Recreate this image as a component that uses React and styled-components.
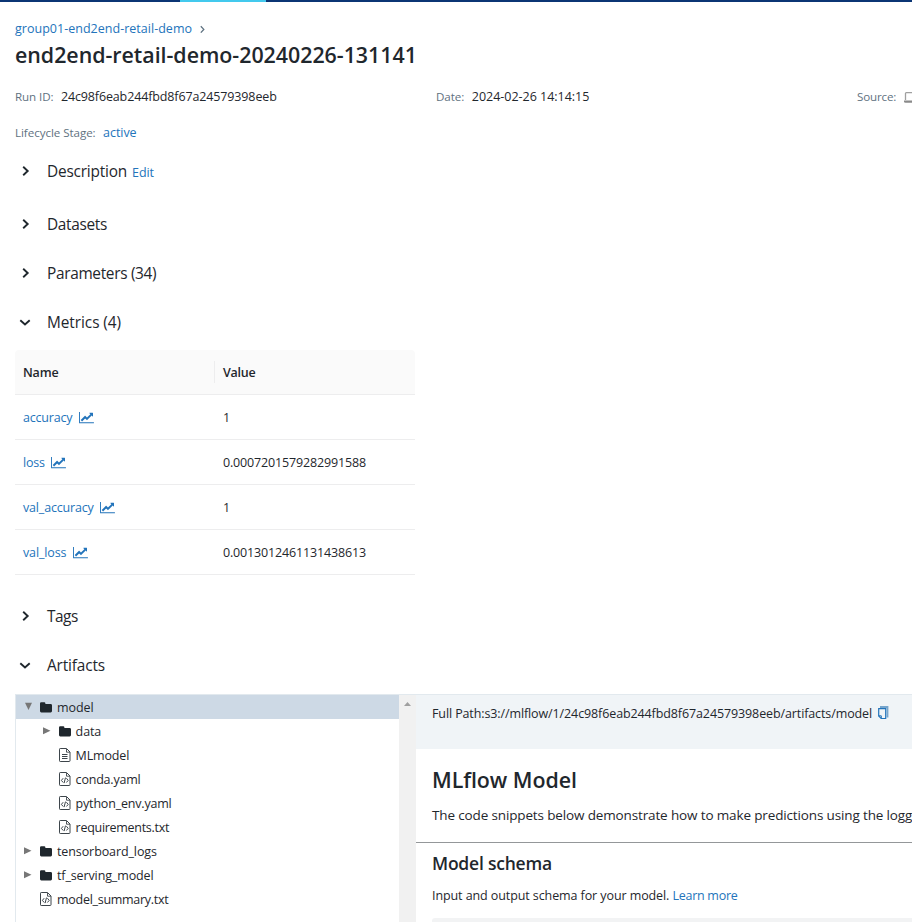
import React from "react";
import styled, { createGlobalStyle } from "styled-components";

const ink = "#1f272d";
const link = "#2374bb";
const muted = "#5f7281";

const GlobalStyle = createGlobalStyle`
  * { box-sizing: border-box; }
  html, body { margin: 0; padding: 0; overflow: hidden; }
  body {
    background: #fff;
    color: ${ink};
    font-family: "Open Sans", "Noto Sans", sans-serif;
    font-size: 12.5px;
    line-height: 20px;
  }
`;

const Page = styled.div`
  width: 100%;
  height: 922px;
  overflow: hidden;
`;
const TopBar = styled.div`
  height: 2px;
  background: #0b3574;
  padding-left: 180px;
`;
const ActiveTab = styled.div`
  width: 86px;
  height: 2px;
  background: #43c9ed;
`;
const Content = styled.main`
  padding: 17px 0 0 15px;
`;
const Text = styled.span`
  letter-spacing: ${(p) => p.$ls || 0}px;
  white-space: pre;
`;
const Link = styled.a`
  color: ${link};
  letter-spacing: ${(p) => p.$ls || 0}px;
  white-space: nowrap;
`;
const Breadcrumb = styled.nav`
  display: flex;
  align-items: center;
  height: 20px;
  gap: 8px;
`;
const Title = styled.h1`
  margin: 0;
  height: 32px;
  font-size: 21.4px;
  line-height: 32px;
  font-weight: 600;
  letter-spacing: -0.03px;
`;
const MetaRow = styled.div`
  display: flex;
  height: 20px;
  margin-top: ${(p) => p.$top}px;
`;
const MetaCell = styled.div`
  display: flex;
  flex: 0 0 421px;
  gap: 7.5px;
  svg { margin-top: 5px; }
`;
const Label = styled(Text)`
  color: ${muted};
  font-size: 11.6px;
`;
const SectionHeader = styled.div`
  display: flex;
  align-items: center;
  height: 24px;
  margin-top: ${(p) => p.$top}px;
  padding-left: 4px;
  line-height: 24px;
`;
const ChevronBox = styled.span`
  display: flex;
  width: 28px;
  height: 14px;
`;
const SectionTitle = styled(Text)`
  font-size: 15.4px;
  margin-right: 5px;
`;
const EditLink = styled(Link)`
  padding-top: 2px;
`;

const Table = styled.div`
  width: 400px;
  margin-top: 15px;
`;
const TableHead = styled.div`
  display: grid;
  grid-template-columns: 200px 200px;
  align-items: center;
  height: 45px;
  background: #fafafa;
  border-bottom: 1px solid #ededee;
  border-radius: 4px 4px 0 0;
  font-weight: 600;
`;
const HeadCell = styled.div`
  height: 22px;
  line-height: 24px;
  padding-left: 8px;
  border-right: ${(p) => (p.$divider ? "1px solid #ededee" : "none")};
`;
const TableRow = styled.div`
  display: grid;
  grid-template-columns: 200px 200px;
  align-items: center;
  height: 45px;
  border-bottom: 1px solid #ededee;
`;
const Cell = styled.div`
  display: flex;
  align-items: center;
  height: 22px;
  padding-left: 8px;
  gap: 6.3px;
  line-height: 22px;
  span, a { padding-top: 2px; }
`;

const Artifacts = styled.section`
  display: flex;
  width: 1000px;
  height: 400px;
  margin-top: 16px;
  border: 1px solid #e2e9ee;
`;
const Tree = styled.div`
  width: 383px;
`;
const TreeRow = styled.div`
  display: flex;
  align-items: center;
  height: 24px;
  padding-left: ${(p) => 8 + p.$depth * 18.6}px;
  background: ${(p) => (p.$selected ? "#cdd9e5" : "transparent")};
`;
const Toggle = styled.span`
  display: flex;
  width: 16px;
  height: 24px;
  padding-top: 7px;
`;
const TreeIcon = styled.span`
  display: flex;
  width: 17px;
  height: 14px;
  align-items: center;
`;
const FileName = styled(Text)`
  padding-top: 2px;
`;
const Scrollbar = styled.div`
  display: flex;
  justify-content: center;
  width: 17px;
  padding-top: 7px;
  background: #f1f1f1;
`;
const Detail = styled.div`
  flex: 1;
`;
const PathBar = styled.div`
  display: flex;
  height: 54px;
  padding: 9px 0 0 16px;
  gap: 5px;
  background: #f0f4f7;
  svg { margin-top: 2px; }
`;
const ModelIntro = styled.div`
  height: 94px;
  padding: 15px 0 0 16px;
  border-bottom: 1px solid #949799;
`;
const ModelTitle = styled.h2`
  margin: 0 0 9px;
  font-size: 21.4px;
  line-height: 32px;
  font-weight: 600;
  letter-spacing: -0.05px;
`;
const Intro = styled.div`
  font-size: 13.5px;
`;
const Schema = styled.div`
  padding: 7px 0 0 16px;
`;
const SchemaTitle = styled.h3`
  margin: 0 0 10px;
  font-size: 17.5px;
  line-height: 26px;
  font-weight: 600;
  letter-spacing: -0.22px;
`;
const SchemaTable = styled.div`
  height: 40px;
  margin-top: 12px;
  background: #f2f3f4;
  border-radius: 3px;
`;

const Chevron = ({ open }) => (
  <svg width="12" height="12" viewBox="0 0 12 12" fill="none" stroke={ink} strokeWidth="1.9">
    <path d={open ? "M1.3 4.2 6 8.4 10.7 4.2" : "M4.2 1.7 8.7 6 4.2 10.3"} />
  </svg>
);
const Crumb = () => (
  <svg width="5" height="8" viewBox="0 0 5 8" fill="none" stroke={muted} strokeWidth="1.3">
    <path d="M.8 1.2 3.8 4.4.8 7.6" />
  </svg>
);
const ChartIcon = () => (
  <svg width="15" height="13" viewBox="0 0 2048 1792" fill={link}>
    <path d="M2048 1536v160H0V128h128v1408zM1920 288v435q0 21-19.500 29.500t-35.500-7.500l-121-121-633 633q-10 10-23 10t-23-10l-233-233-416 416-192-192 585-585q10-10 23-10t23 10l233 233 464-464-121-121q-16-16-7.500-35.500t29.500-19.500h435q14 0 23 9t9 23z" />
  </svg>
);
const LaptopIcon = () => (
  <svg width="16" height="11" viewBox="0 0 16 11">
    <path d="M1.500 8V1.500q0-.8.8-.8h11.400q.8 0 .8.8V8" fill="none" stroke="#a0a0a0" strokeWidth="1.300" />
    <path d="M0 8.500h16v1q0 1.200-1.500 1.200h-13Q0 10.700 0 9.500z" fill="#8a8a8a" />
  </svg>
);
const FolderIcon = () => (
  <svg width="12" height="11" viewBox="0 0 12 11" fill={ink}>
    <path d="M0 1.500Q0 .3 1.200.3h3Q5.400.3 5.400 1.500V2h5.200Q12 2 12 3.300v5.800q0 1.300-1.300 1.300H1.300Q0 10.400 0 9.100z" />
  </svg>
);
const FileIcon = ({ code }) => (
  <svg width="12" height="14" viewBox="0 0 12 14" fill="none" stroke="#3d454b">
    <path d="M.5 1.200q0-.7.7-.7h6.300l3.500 3.500v8.800q0 .7-.7.700H1.200q-.7 0-.7-.7z" />
    <path d="M7.500.8v3.400h3.400" strokeWidth=".9" />
    {code ? (
      <path d="M4.200 6.200 2.400 8.400l1.800 2.100M7.400 6.200l1.800 2.200-1.800 2.100M6.500 5.600 5.100 11.100" strokeWidth="1" />
    ) : (
      <path d="M3 6.500h5.500M3 8.500h5.500M3 10.500h5.500" />
    )}
  </svg>
);
const CopyIcon = () => (
  <svg width="12" height="14" viewBox="0 0 12 14" fill="none">
    <path d="M3 1h7.500v10.500" stroke="#76a5cc" strokeWidth="1.800" />
    <path d="M1.700 2.700h7v9.800H4.200L1.700 10z" fill="#f0f4f7" stroke={link} strokeWidth="1.200" />
    <path d="M1.700 9.800h2.600v2.700" stroke={link} />
  </svg>
);
const Arrow = ({ open }) => (
  <svg width="9" height="9" viewBox="0 0 9 9" fill="#777">
    <path d={open ? "M1 .7h7L4.500 8z" : "M0 1.200 7.500 4.700 0 8.200z"} />
  </svg>
);
const fileIcons = {
  folder: <FolderIcon />,
  text: <FileIcon />,
  code: <FileIcon code />,
};

const metrics = [
  ["accuracy", "1", -0.21],
  ["loss", "0.0007201579282991588", -0.18],
  ["val_accuracy", "1", -0.17],
  ["val_loss", "0.0013012461131438613", -0.14],
];
const files = [
  { name: "model", depth: 0, icon: "folder", open: true, ls: -0.09 },
  { name: "data", depth: 1, icon: "folder", ls: -0.1 },
  { name: "MLmodel", depth: 1, icon: "text", ls: -0.16 },
  { name: "conda.yaml", depth: 1, icon: "code", ls: -0.2 },
  { name: "python_env.yaml", depth: 1, icon: "code", ls: -0.19 },
  { name: "requirements.txt", depth: 1, icon: "code", ls: -0.29 },
  { name: "tensorboard_logs", depth: 0, icon: "folder", ls: -0.1 },
  { name: "tf_serving_model", depth: 0, icon: "folder", ls: -0.12 },
  { name: "model_summary.txt", depth: 0, icon: "code", ls: -0.28 },
];

const Section = ({ title, top, open, ls, children }) => (
  <SectionHeader $top={top}>
    <ChevronBox><Chevron open={open} /></ChevronBox>
    <SectionTitle $ls={ls}>{title}</SectionTitle>
    {children}
  </SectionHeader>
);

export default function App() {
  return (
    <Page>
      <GlobalStyle />
      <TopBar><ActiveTab /></TopBar>
      <Content>
        <Breadcrumb>
          <Link $ls={0.02}>group01-end2end-retail-demo</Link>
          <Crumb />
        </Breadcrumb>
        <Title>end2end-retail-demo-20240226-131141</Title>
        <MetaRow $top={16}>
          <MetaCell>
            <Label $ls={-0.1}>Run ID:</Label>
            <Text $ls={-0.13}>24c98f6eab244fbd8f67a24579398eeb</Text>
          </MetaCell>
          <MetaCell>
            <Label $ls={-0.05}>Date:</Label>
            <Text $ls={-0.02}>2024-02-26 14:14:15</Text>
          </MetaCell>
          <MetaCell>
            <Label $ls={-0.15}>Source:</Label>
            <LaptopIcon />
          </MetaCell>
        </MetaRow>
        <MetaRow $top={16}>
          <MetaCell>
            <Label $ls={-0.06}>Lifecycle Stage:</Label>
            <Link $ls={-0.06}>active</Link>
          </MetaCell>
        </MetaRow>

        <Section title="Description" top={17} ls={-0.2}>
          <EditLink $ls={-0.05}>Edit</EditLink>
        </Section>
        <Section title="Datasets" top={29} ls={-0.33} />
        <Section title="Parameters (34)" top={25} ls={-0.31} />
        <Section title="Metrics (4)" top={25} ls={-0.06} open />

        <Table>
          <TableHead>
            <HeadCell $divider><Text $ls={-0.17}>Name</Text></HeadCell>
            <HeadCell><Text $ls={-0.23}>Value</Text></HeadCell>
          </TableHead>
          {metrics.map(([name, value, ls]) => (
            <TableRow key={name}>
              <Cell><Link $ls={ls}>{name}</Link><ChartIcon /></Cell>
              <Cell><Text $ls={-0.16}>{value}</Text></Cell>
            </TableRow>
          ))}
        </Table>

        <Section title="Tags" top={30} ls={-0.48} />
        <Section title="Artifacts" top={25} ls={-0.15} open />

        <Artifacts>
          <Tree>
            {files.map((f) => (
              <TreeRow key={f.name} $depth={f.depth} $selected={f.open}>
                <Toggle>{f.icon === "folder" && <Arrow open={f.open} />}</Toggle>
                <TreeIcon>{fileIcons[f.icon]}</TreeIcon>
                <FileName $ls={f.ls}>{f.name}</FileName>
              </TreeRow>
            ))}
          </Tree>
          <Scrollbar>
            <svg width="7" height="4" viewBox="0 0 7 4" fill="#a0a0a0"><path d="M0 4 3.500 0 7 4z" /></svg>
          </Scrollbar>
          <Detail>
            <PathBar>
              <Text $ls={-0.11}>Full Path:s3://mlflow/1/24c98f6eab244fbd8f67a24579398eeb/artifacts/model</Text>
              <CopyIcon />
            </PathBar>
            <ModelIntro>
              <ModelTitle>MLflow Model</ModelTitle>
              <Intro><Text $ls={-0.14}>The code snippets below demonstrate how to make predictions using the logged model.</Text></Intro>
            </ModelIntro>
            <Schema>
              <SchemaTitle>Model schema</SchemaTitle>
              <Text $ls={-0.09}>{"Input and output schema for your model. "}</Text>
              <Link $ls={-0.27}>Learn more</Link>
              <SchemaTable />
            </Schema>
          </Detail>
        </Artifacts>
      </Content>
    </Page>
  );
}
